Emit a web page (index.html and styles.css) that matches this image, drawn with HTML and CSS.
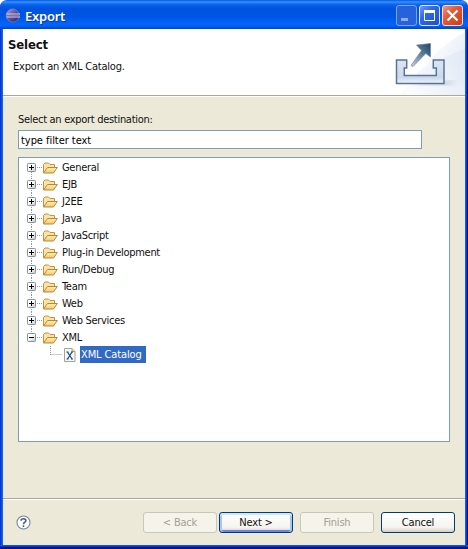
FILE: index.html
```html
<!DOCTYPE html>
<html lang="en">
<head>
<meta charset="utf-8">
<title>Export</title>
<link rel="stylesheet" href="styles.css">
</head>
<body>
<svg width="0" height="0" class="defs" aria-hidden="true">
  <defs>
    <linearGradient id="gold" x1="0" y1="0" x2="0" y2="1"><stop offset="0" stop-color="#fff0b8"/><stop offset="1" stop-color="#f5c765"/></linearGradient>
    <linearGradient id="key" x1="0" y1="0" x2="1" y2="1"><stop offset=".4" stop-color="#fff"/><stop offset="1" stop-color="#c9c4b6"/></linearGradient>
    <symbol id="folder" viewBox="0 0 16 16">
      <path d="M1.5 13V4.500L3 3h3.5L8 4.500h4.500v3" fill="#fbe3a0" stroke="#c3924a"/>
      <path d="M1.500 13 5.500 7.500h9.800L11.500 13z" fill="url(#gold)" stroke="#b98640" stroke-linejoin="round"/>
    </symbol>
    <symbol id="plus" viewBox="0 0 9 9"><rect x=".5" y=".5" width="8" height="8" rx=".8" fill="url(#key)" stroke="#7b93ab"/><path d="M2 4.5h5M4.5 2v5" stroke="#000"/></symbol>
    <symbol id="minus" viewBox="0 0 9 9"><rect x=".5" y=".5" width="8" height="8" rx=".8" fill="url(#key)" stroke="#7b93ab"/><path d="M2 4.5h5" stroke="#000"/></symbol>
  </defs>
</svg>
<main class="window">
  <header class="titlebar">
    <svg class="logo" width="16" height="16" viewBox="0 0 16 16">
      <defs><linearGradient id="orb" x1="0" y1="0" x2="1" y2="1"><stop offset="0" stop-color="#b2a6d8"/><stop offset=".45" stop-color="#6257a0"/><stop offset="1" stop-color="#272063"/></linearGradient></defs>
      <circle cx="7.700" cy="7.500" r="6.600" fill="url(#orb)" stroke="#8b91d4" stroke-width=".5"/>
      <path d="M1.500 6h13.500M1.500 9H15" stroke="#d5d0ea"/><path d="M1.500 7.500h13" stroke="#82739f"/>
    </svg>
    <h1>Export</h1>
    <div class="controls">
      <svg class="dim" width="21" height="21" viewBox="0 0 21 21">
        <defs><linearGradient id="blue" x1="0" y1="0" x2="1" y2="1"><stop offset="0" stop-color="#739bf5"/><stop offset=".4" stop-color="#2f68e5"/><stop offset="1" stop-color="#1b4fc9"/></linearGradient></defs>
        <rect x=".5" y=".5" width="20" height="20" rx="2.5" fill="#2861dc" stroke="#7ba5f4"/><path d="M5 14.5h7" stroke="#8facf0" stroke-width="3"/>
      </svg>
      <svg width="21" height="21" viewBox="0 0 21 21"><rect x=".5" y=".5" width="20" height="20" rx="2.5" fill="url(#blue)" stroke="#e0eaff"/><path d="M5.500 5.500h10v10h-10z" fill="none" stroke="#fff"/><path d="M5 6.500h11" stroke="#fff" stroke-width="3"/></svg>
      <svg width="21" height="21" viewBox="0 0 21 21">
        <defs><linearGradient id="red" x1="0" y1="0" x2="1" y2="1"><stop offset="0" stop-color="#f09a81"/><stop offset=".4" stop-color="#e35a36"/><stop offset="1" stop-color="#c93d18"/></linearGradient></defs>
        <rect x=".5" y=".5" width="20" height="20" rx="2.5" fill="url(#red)" stroke="#f3ded9"/><path d="m5.500 5.500 10 10m0-10-10 10" stroke="#fff" stroke-width="2.200"/>
      </svg>
    </div>
  </header>
  <section class="banner">
    <div class="heading"><h2>Select</h2><p>Export an XML Catalog.</p></div>
    <svg class="art" width="95" height="66" viewBox="0 0 95 66">
      <defs>
        <linearGradient id="glow" x1="0" y1="0" x2="1" y2=".6"><stop offset=".35" stop-color="#fff"/><stop offset="1" stop-color="#d5dff1"/></linearGradient>
        <linearGradient id="tray" x1="0" y1="0" x2="0" y2="1"><stop offset="0" stop-color="#dce6f3"/><stop offset=".75" stop-color="#cbd9ec"/><stop offset="1" stop-color="#eef4fb"/></linearGradient>
        <linearGradient id="arrow" x1="1" y1="0" x2="0" y2="1"><stop offset="0" stop-color="#1d4563"/><stop offset=".45" stop-color="#5b7d9c"/><stop offset="1" stop-color="#c5d3e4"/></linearGradient>
        <linearGradient id="beam" x1="0" y1="1" x2="1" y2="0"><stop offset="0" stop-color="#fff"/><stop offset="1" stop-color="#dce5f4"/></linearGradient>
        <filter id="soft"><feGaussianBlur stdDeviation="2"/></filter>
      </defs>
      <path d="M30 66C52 38 70 16 95 3V66z" fill="url(#glow)" opacity=".65"/>
      <path d="M48 43Q72 28 95 20V66H35z" fill="url(#beam)" opacity=".65"/>
      <path d="M60 52h22l4 1-10 3H40z" fill="#a9b4c9" opacity=".6" filter="url(#soft)"/>
      <path d="M29 31H39.200v8h-2.400v7.500h32V39h-3v-8h10.700v23.500H29z" fill="url(#tray)" stroke="#5a7498" stroke-width="1.500" transform="translate(-2.500)"/>
      <path d="M41 36.500 51.500 21.500l-5-5.500 14-1.500V28l-4.700-3.500L43 37.500z" fill="url(#arrow)" stroke="#6f86a5" stroke-width=".7"/>
    </svg>
  </section>
  <section class="content">
    <label for="filter">Select an export destination:</label>
    <input id="filter" value="type filter text">
    <ul class="tree">
      <li><svg class="toggle"><use href="#plus"/></svg><svg class="folder"><use href="#folder"/></svg><span>General</span></li>
      <li><svg class="toggle"><use href="#plus"/></svg><svg class="folder"><use href="#folder"/></svg><span>EJB</span></li>
      <li><svg class="toggle"><use href="#plus"/></svg><svg class="folder"><use href="#folder"/></svg><span>J2EE</span></li>
      <li><svg class="toggle"><use href="#plus"/></svg><svg class="folder"><use href="#folder"/></svg><span>Java</span></li>
      <li><svg class="toggle"><use href="#plus"/></svg><svg class="folder"><use href="#folder"/></svg><span>JavaScript</span></li>
      <li><svg class="toggle"><use href="#plus"/></svg><svg class="folder"><use href="#folder"/></svg><span>Plug-in Development</span></li>
      <li><svg class="toggle"><use href="#plus"/></svg><svg class="folder"><use href="#folder"/></svg><span>Run/Debug</span></li>
      <li><svg class="toggle"><use href="#plus"/></svg><svg class="folder"><use href="#folder"/></svg><span>Team</span></li>
      <li><svg class="toggle"><use href="#plus"/></svg><svg class="folder"><use href="#folder"/></svg><span>Web</span></li>
      <li><svg class="toggle"><use href="#plus"/></svg><svg class="folder"><use href="#folder"/></svg><span>Web Services</span></li>
      <li class="last"><svg class="toggle"><use href="#minus"/></svg><svg class="folder"><use href="#folder"/></svg><span>XML</span></li>
      <li class="child"><svg class="branch" width="12" height="17"><path d="M.5 0v9M.5 8.500H12" fill="none" stroke="#999" stroke-dasharray="1 1"/></svg><svg class="file" width="12" height="14" viewBox="0 0 12 14"><path d="M.5.500h7.500l3 3v10H.500z" fill="#f4f7fc" stroke="#a8a18c"/><path d="M8 .500v3h3" fill="#e0d39d" stroke="#b5a778"/><path d="m3.500 4 4.500 7M8 4l-4.500 7" stroke="#234e70" stroke-width="1.300"/><path d="M2.500 4h2M7 4h2M2.500 11h2M7 11h2" stroke="#234e70"/></svg><span class="selected">XML Catalog</span></li>
    </ul>
  </section>
  <footer>
    <svg class="help" width="15" height="15" viewBox="0 0 15 15"><circle cx="7.500" cy="7.500" r="6.500" fill="#fff" stroke="#7187a9" stroke-width="1.100"/><path d="M5 5.700C5.100 3.100 10 3.100 9.900 5.700 9.800 7.200 7.500 7.300 7.500 9.300M7.500 10.300v1.700" fill="none" stroke="#425d87" stroke-width="1.600"/></svg>
    <div class="pair"><button disabled>&lt; Back</button><button class="primary">Next &gt;</button></div>
    <button disabled class="finish">Finish</button>
    <button>Cancel</button>
  </footer>
  <div class="edge"></div>
</main>
</body>
</html>
```
FILE: styles.css
```css
* { box-sizing: border-box; }
html { background: #fff; }
body { margin: 0; font: 11px/17px "DejaVu Sans Condensed", "DejaVu Sans", sans-serif; font-stretch: condensed; letter-spacing: -.3px; color: #111; }
h1, h2, p, ul { margin: 0; padding: 0; }
.defs { position: absolute; }
.window { width: 468px; height: 549px; display: flex; flex-direction: column; background: linear-gradient(90deg, #0831d9 0 1px, #0855dd 1px 2px, #1660e8 2px 3px, #ece9d8 3px 465px, #1660e8 465px 466px, #0838ce 466px 467px, #00138c 467px); border-radius: 7px 7px 0 0; overflow: hidden; }
.titlebar { height: 29px; flex: none; display: flex; align-items: center; padding: 2px 5px 0 5px; background: linear-gradient(#0058e6 0, #3a91ff 2px, #2478f3 3px, #0561ec 5px, #0053df 9px, #0055e5 17px, #0265fa 24px, #0261f7 26px, #0041c8 29px); }
.titlebar h1 { margin-left: 4px; color: #fff; font: 600 13px/20px "Noto Sans", sans-serif; letter-spacing: -.25px; text-shadow: 1px 1px #0938a8; }
.controls { display: flex; gap: 2px; margin-left: auto; }
.banner { height: 67px; flex: none; margin: 0 3px; background: #fff; border-bottom: 1px solid #aca899; display: flex; justify-content: space-between; }
.heading { padding: 7px 0 0 5px; }
.heading h2 { font: bold 13px/17px "DejaVu Sans Condensed", sans-serif; font-stretch: condensed; letter-spacing: -.15px; }
.heading p { margin: 5px 0 0 5px; letter-spacing: -.2px; }
.content { height: 402px; display: flex; flex-direction: column; border-top: 1px solid #fff; margin: 0 3px; padding: 14px 15px 0; }
label { height: 19px; }
input { width: 404px; height: 19px; margin: 0; padding: 1px 2px 0; border: 1px solid #7f9db9; background: #fff; font: inherit; letter-spacing: -.05px; outline: 0; }
.tree { list-style: none; margin-top: 8px; width: 432px; height: 285px; background: #fff; border: 1px solid #7f9db9; padding: 1px 0 0 8px; }
.tree li { height: 17px; display: flex; align-items: center; background: repeating-linear-gradient(90deg, #999 0 1px, transparent 1px 2px) 10px 8px / 5px 1px no-repeat, repeating-linear-gradient(#999 0 1px, transparent 1px 2px) 4px 0 / 1px 18px no-repeat; }
.tree li:first-child { background-position: 10px 8px, 4px 9px; }
.tree li.last { background-size: 5px 1px, 1px 9px; }
.tree li.child { background: none; padding-left: 23px; }
.tree li > span { padding-top: 1px; height: 17px; line-height: 16px; }
.toggle { width: 9px; height: 9px; flex: none; }
.folder { width: 16px; height: 16px; margin-left: 6px; margin-right: 4px; flex: none; }
.file { margin: 0 4px 0 2px; }
.tree .selected { color: #fff; background: #316ac5; width: 66px; padding-left: 1px; letter-spacing: -.12px; }
footer { height: 47px; flex: none; display: flex; align-items: center; margin: 0 3px; padding: 0 10px 0 13px; border-top: 1px solid #aca899; box-shadow: inset 0 1px #fff; }
.pair { display: flex; gap: 2px; margin-left: auto; }
.finish { margin: 0 7px 0 7px; }
.help { flex: none; }
button { width: 74px; height: 21px; padding: 0; border: 1px solid #003c74; border-radius: 3px; background: linear-gradient(#fff, #f5f4ef 75%, #d6d0c5); font: inherit; letter-spacing: -.2px; color: #111; }
button:disabled { border-color: #c9c7ba; background: #f5f4ea; color: #a1a192; }
.primary { box-shadow: inset 0 2px #cee7ff, inset 2px 0 #a8c5f3, inset -2px 0 #a8c5f3, inset 0 -2px #6982ee; }
.edge { height: 4px; flex: none; background: linear-gradient(#1550dc 0 1px, #0838ce 1px 2px, #00138c 2px); }
```
